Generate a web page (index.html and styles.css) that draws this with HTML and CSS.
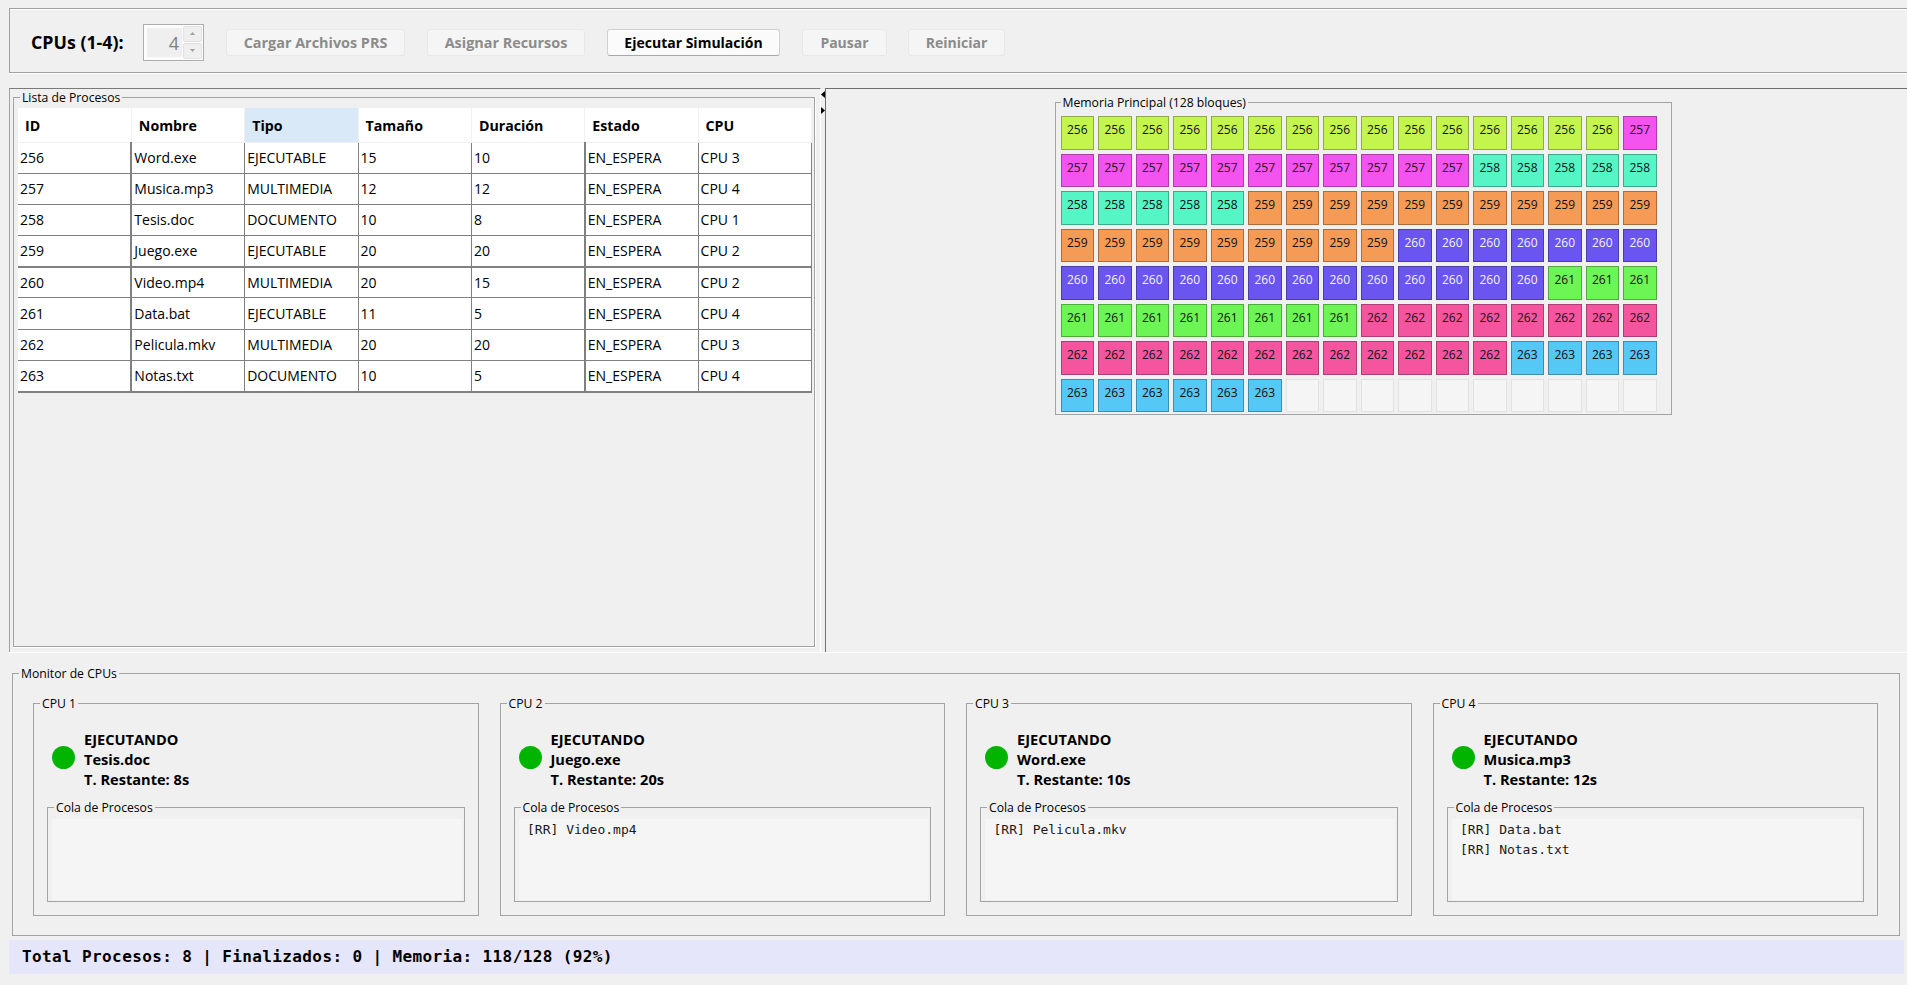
FILE: index.html
```html
<!DOCTYPE html>
<html lang="es">
<head>
<meta charset="utf-8">
<title>Simulador de CPUs</title>
<link rel="stylesheet" href="styles.css">
</head>
<body>
<header class="toolbar">
  <label class="cpu-label">CPUs (1-4):</label>
  <div class="spinner">
    <span class="spin-value">4</span>
    <span class="spin-arrows">
      <span class="spin-btn"><svg width="7" height="5" viewBox="0 0 7 5"><path d="M3.5 1 6 4H1z"/></svg></span>
      <span class="spin-btn"><svg width="7" height="5" viewBox="0 0 7 5"><path d="M3.5 4 1 1h5z"/></svg></span>
    </span>
  </div>
  <button class="btn btn-cargar" disabled>Cargar Archivos PRS</button>
  <button class="btn btn-asignar" disabled>Asignar Recursos</button>
  <button class="btn btn-ejecutar">Ejecutar Simulación</button>
  <button class="btn btn-pausar" disabled>Pausar</button>
  <button class="btn btn-reiniciar" disabled>Reiniciar</button>
</header>

<main class="split">
  <section class="pane-left">
    <div class="titled procesos">
      <span class="title">Lista de Procesos</span>
      <table class="table">
        <thead>
          <tr><th>ID</th><th>Nombre</th><th class="sel">Tipo</th><th>Tamaño</th><th>Duración</th><th>Estado</th><th>CPU</th></tr>
        </thead>
        <tbody>
          <tr><td>256</td><td>Word.exe</td><td>EJECUTABLE</td><td>15</td><td>10</td><td>EN_ESPERA</td><td>CPU 3</td></tr>
          <tr><td>257</td><td>Musica.mp3</td><td>MULTIMEDIA</td><td>12</td><td>12</td><td>EN_ESPERA</td><td>CPU 4</td></tr>
          <tr><td>258</td><td>Tesis.doc</td><td>DOCUMENTO</td><td>10</td><td>8</td><td>EN_ESPERA</td><td>CPU 1</td></tr>
          <tr><td>259</td><td>Juego.exe</td><td>EJECUTABLE</td><td>20</td><td>20</td><td>EN_ESPERA</td><td>CPU 2</td></tr>
          <tr><td>260</td><td>Video.mp4</td><td>MULTIMEDIA</td><td>20</td><td>15</td><td>EN_ESPERA</td><td>CPU 2</td></tr>
          <tr><td>261</td><td>Data.bat</td><td>EJECUTABLE</td><td>11</td><td>5</td><td>EN_ESPERA</td><td>CPU 4</td></tr>
          <tr><td>262</td><td>Pelicula.mkv</td><td>MULTIMEDIA</td><td>20</td><td>20</td><td>EN_ESPERA</td><td>CPU 3</td></tr>
          <tr><td>263</td><td>Notas.txt</td><td>DOCUMENTO</td><td>10</td><td>5</td><td>EN_ESPERA</td><td>CPU 4</td></tr>
        </tbody>
      </table>
    </div>
  </section>
  <div class="divider">
    <svg class="arrow-l" width="4" height="7" viewBox="0 0 4 7"><path d="M4 0v7L0 3.5z"/></svg>
    <svg class="arrow-r" width="4" height="7" viewBox="0 0 4 7"><path d="M0 0v7l4-3.5z"/></svg>
  </div>
  <section class="pane-right">
    <div class="titled memoria">
      <span class="title">Memoria Principal (128 bloques)</span>
      <div class="grid">
        <div class="c a">256</div><div class="c a">256</div><div class="c a">256</div><div class="c a">256</div><div class="c a">256</div><div class="c a">256</div><div class="c a">256</div><div class="c a">256</div><div class="c a">256</div><div class="c a">256</div><div class="c a">256</div><div class="c a">256</div><div class="c a">256</div><div class="c a">256</div><div class="c a">256</div><div class="c b">257</div>
        <div class="c b">257</div><div class="c b">257</div><div class="c b">257</div><div class="c b">257</div><div class="c b">257</div><div class="c b">257</div><div class="c b">257</div><div class="c b">257</div><div class="c b">257</div><div class="c b">257</div><div class="c b">257</div><div class="c d">258</div><div class="c d">258</div><div class="c d">258</div><div class="c d">258</div><div class="c d">258</div>
        <div class="c d">258</div><div class="c d">258</div><div class="c d">258</div><div class="c d">258</div><div class="c d">258</div><div class="c e">259</div><div class="c e">259</div><div class="c e">259</div><div class="c e">259</div><div class="c e">259</div><div class="c e">259</div><div class="c e">259</div><div class="c e">259</div><div class="c e">259</div><div class="c e">259</div><div class="c e">259</div>
        <div class="c e">259</div><div class="c e">259</div><div class="c e">259</div><div class="c e">259</div><div class="c e">259</div><div class="c e">259</div><div class="c e">259</div><div class="c e">259</div><div class="c e">259</div><div class="c f">260</div><div class="c f">260</div><div class="c f">260</div><div class="c f">260</div><div class="c f">260</div><div class="c f">260</div><div class="c f">260</div>
        <div class="c f">260</div><div class="c f">260</div><div class="c f">260</div><div class="c f">260</div><div class="c f">260</div><div class="c f">260</div><div class="c f">260</div><div class="c f">260</div><div class="c f">260</div><div class="c f">260</div><div class="c f">260</div><div class="c f">260</div><div class="c f">260</div><div class="c g">261</div><div class="c g">261</div><div class="c g">261</div>
        <div class="c g">261</div><div class="c g">261</div><div class="c g">261</div><div class="c g">261</div><div class="c g">261</div><div class="c g">261</div><div class="c g">261</div><div class="c g">261</div><div class="c h">262</div><div class="c h">262</div><div class="c h">262</div><div class="c h">262</div><div class="c h">262</div><div class="c h">262</div><div class="c h">262</div><div class="c h">262</div>
        <div class="c h">262</div><div class="c h">262</div><div class="c h">262</div><div class="c h">262</div><div class="c h">262</div><div class="c h">262</div><div class="c h">262</div><div class="c h">262</div><div class="c h">262</div><div class="c h">262</div><div class="c h">262</div><div class="c h">262</div><div class="c i">263</div><div class="c i">263</div><div class="c i">263</div><div class="c i">263</div>
        <div class="c i">263</div><div class="c i">263</div><div class="c i">263</div><div class="c i">263</div><div class="c i">263</div><div class="c i">263</div><div class="c v"></div><div class="c v"></div><div class="c v"></div><div class="c v"></div><div class="c v"></div><div class="c v"></div><div class="c v"></div><div class="c v"></div><div class="c v"></div><div class="c v"></div>
      </div>
    </div>
  </section>
</main>

<section class="titled monitor">
  <span class="title">Monitor de CPUs</span>
  <div class="cpus">
    <article class="titled cpu">
      <span class="title">CPU 1</span>
      <div class="cpu-state">
        <span class="led"></span>
        <div class="cpu-info"><div>EJECUTANDO</div><div>Tesis.doc</div><div>T. Restante: 8s</div></div>
      </div>
      <div class="titled cola">
        <span class="title">Cola de Procesos</span>
        <div class="cola-list"></div>
      </div>
    </article>
    <article class="titled cpu">
      <span class="title">CPU 2</span>
      <div class="cpu-state">
        <span class="led"></span>
        <div class="cpu-info"><div>EJECUTANDO</div><div>Juego.exe</div><div>T. Restante: 20s</div></div>
      </div>
      <div class="titled cola">
        <span class="title">Cola de Procesos</span>
        <div class="cola-list"><div>[RR] Video.mp4</div></div>
      </div>
    </article>
    <article class="titled cpu">
      <span class="title">CPU 3</span>
      <div class="cpu-state">
        <span class="led"></span>
        <div class="cpu-info"><div>EJECUTANDO</div><div>Word.exe</div><div>T. Restante: 10s</div></div>
      </div>
      <div class="titled cola">
        <span class="title">Cola de Procesos</span>
        <div class="cola-list"><div>[RR] Pelicula.mkv</div></div>
      </div>
    </article>
    <article class="titled cpu">
      <span class="title">CPU 4</span>
      <div class="cpu-state">
        <span class="led"></span>
        <div class="cpu-info"><div>EJECUTANDO</div><div>Musica.mp3</div><div>T. Restante: 12s</div></div>
      </div>
      <div class="titled cola">
        <span class="title">Cola de Procesos</span>
        <div class="cola-list"><div>[RR] Data.bat</div><div>[RR] Notas.txt</div></div>
      </div>
    </article>
  </div>
</section>

<footer class="status">Total Procesos: 8 | Finalizados: 0 | Memoria: 118/128 (92%)</footer>
</body>
</html>
```
FILE: styles.css
```css
* { box-sizing: border-box; }
html, body { height: 100%; }
body {
  margin: 0;
  background: #f0f0f0;
  font-family: "Open Sans", "Noto Sans", sans-serif;
  color: #000;
  overflow: hidden;
}

/* toolbar */
.toolbar {
  display: flex;
  align-items: center;
  height: 65px;
  margin: 8px 0 0 9px;
  padding: 3px 0 0 21px;
  border: 1px solid #a0a0a0;
  border-right: 0;
  box-shadow: inset 0 1px 0 #fff, 0 1px 0 #fff;
}
.cpu-label { font-size: 17.8px; font-weight: 700; width: 112px; white-space: nowrap; }
.spinner {
  display: flex;
  align-items: stretch;
  width: 61px;
  height: 37px;
  padding: 1px;
  border: 1px solid #adadad;
  background: #fcfcfc;
  margin-right: 22px;
}
.spin-value {
  flex: 1;
  margin: 2px 0 2px 2px;
  background: #efefef;
  color: #808080;
  font-size: 18px;
  text-align: right;
  line-height: 30px;
  padding-right: 3px;
}
.spin-arrows {
  width: 19px;
  margin-left: 1px;
  display: flex;
  flex-direction: column;
  gap: 1px;
}
.spin-btn {
  flex: 1;
  display: flex;
  align-items: center;
  justify-content: center;
  background: #efefef;
  border: 1px solid #e2e2e2;
  border-radius: 2px;
}
.spin-btn svg { fill: #a0a0a0; }
.btn {
  height: 27px;
  padding: 0;
  border: 1px solid #e8e8e8;
  border-radius: 3px;
  background: #f5f5f5;
  color: #8b8b8b;
  font: 700 14px "Open Sans", "Noto Sans", sans-serif;
}
.btn-cargar { width: 179px; margin-right: 22px; font-size: 14.4px; }
.btn-asignar { width: 158px; margin-right: 22px; font-size: 14.4px; }
.btn-ejecutar {
  width: 173px;
  margin-right: 22px;
  background: #fbfbfb;
  color: #000;
  border-color: #d0d0d0;
  border-bottom-color: #a8a8a8;
}
.btn-pausar { width: 85px; margin-right: 21px; }
.btn-reiniciar { width: 97px; }

/* titled borders */
.titled {
  position: relative;
  border: 1px solid #a3a3a3;
}
.title {
  position: absolute;
  top: -8px;
  left: 6px;
  padding: 0 2px;
  background: #f0f0f0;
  font-size: 12.2px;
  line-height: 15px;
  white-space: nowrap;
}

/* split */
.split {
  display: flex;
  height: 564px;
  margin: 15px 0 0 9px;
  box-shadow: 0 1px 0 #fff;
}
.pane-left {
  width: 812px;
  padding: 8px 5px 5px 3px;
  border-top: 1px solid #7a7a7a;
  border-left: 1px solid #a0a0a0;
  border-right: 1px solid #fff;
}
.procesos { height: 100%; padding: 10px 3px 0 4px; box-shadow: 0 1px 0 #fff, 1px 0 0 #fff; }
.divider { position: relative; width: 4px; }
.arrow-l { position: absolute; top: 3px; left: 0; display: block; }
.arrow-r { position: absolute; top: 19px; left: 0; display: block; }
.pane-right {
  flex: 1;
  display: flex;
  justify-content: center;
  align-items: flex-start;
  padding: 13px 7px 0 0;
  border-top: 1px solid #6e6e6e;
  border-left: 1px solid #6e6e6e;
}
.memoria { padding: 13px 14px 2px 5px; }
.memoria .title { left: 5px; }

/* table */
.table {
  width: 794px;
  table-layout: fixed;
  border-collapse: collapse;
  background: #fff;
  font-size: 14px;
}
.table th {
  height: 34px;
  padding: 2px 0 0 7px;
  text-align: left;
  font-size: 14.2px;
  font-weight: 700;
  border-right: 1px solid #f0f0f0;
  border-bottom: 1px solid #f0f0f0;
}
.table th.sel { background: #d9e9f8; }
.table td {
  height: 31.2px;
  padding: 0 0 0 2px;
  border: 1px solid #808080;
  border-left: 0;
}
.table td:nth-child(1), .table td:nth-child(5) { border-right-width: 2px; }
.table tbody tr:nth-child(4) td { border-bottom-width: 2px; }
.table tbody tr:last-child td { border-bottom-width: 2px; }

/* memory grid */
.grid {
  display: grid;
  grid-template-columns: repeat(16, 1fr);
  grid-template-rows: repeat(8, 1fr);
  gap: 4px;
  width: 596px;
  height: 296px;
}
.c {
  border: 1px solid;
  font-size: 12px;
  line-height: 15px;
  padding-top: 5px;
  text-align: center;
  color: #111;
}
.a { background: #c4f54f; border-color: #8fab45; }
.b { background: #f553f0; border-color: #ab3ea8; }
.d { background: #55f5c6; border-color: #3fa98a; }
.e { background: #f59b55; border-color: #ab6d3e; }
.f { background: #6a55f0; border-color: #4b3da8; color: #f4f4f4; }
.g { background: #6cf555; border-color: #4fab3e; }
.h { background: #f5559f; border-color: #ab3f72; }
.i { background: #55c8f5; border-color: #3f8cab; }
.v { background: #f5f5f5; border-color: #e2e2e2; }

/* monitor */
.monitor {
  height: 263px;
  margin: 21px 7px 0 12px;
  padding: 29px 21px 0 20px;
}
.cpus {
  display: grid;
  grid-template-columns: repeat(4, 1fr);
  gap: 21px;
}
.cpu { height: 213px; padding: 27px 13px 0 13px; }
.cpu-state {
  display: flex;
  align-items: center;
  gap: 9px;
  padding-left: 5px;
  height: 60px;
  margin-top: -4px;
}
.led {
  width: 23px;
  height: 23px;
  border-radius: 50%;
  background: #00b400;
}
.cpu-info { padding-top: 3px; font-size: 14.6px; font-weight: 700; line-height: 20px; }
.cola {
  height: 95px;
  margin-top: 20px;
  padding: 11px 2px 1px 4px;
}
.cola-list {
  height: 100%;
  background: #f5f5f5;
  padding: 1px 0 0 8.5px;
  font: 13px/20px "DejaVu Sans Mono", monospace;
  color: #1a1a1a;
}

/* status */
.status {
  height: 34px;
  margin: 4px 3px 0 9px;
  padding-left: 13px;
  background: #e6e6fa;
  font: 700 16px/33px "DejaVu Sans Mono", monospace;
  letter-spacing: .38px;
  white-space: nowrap;
}
```
